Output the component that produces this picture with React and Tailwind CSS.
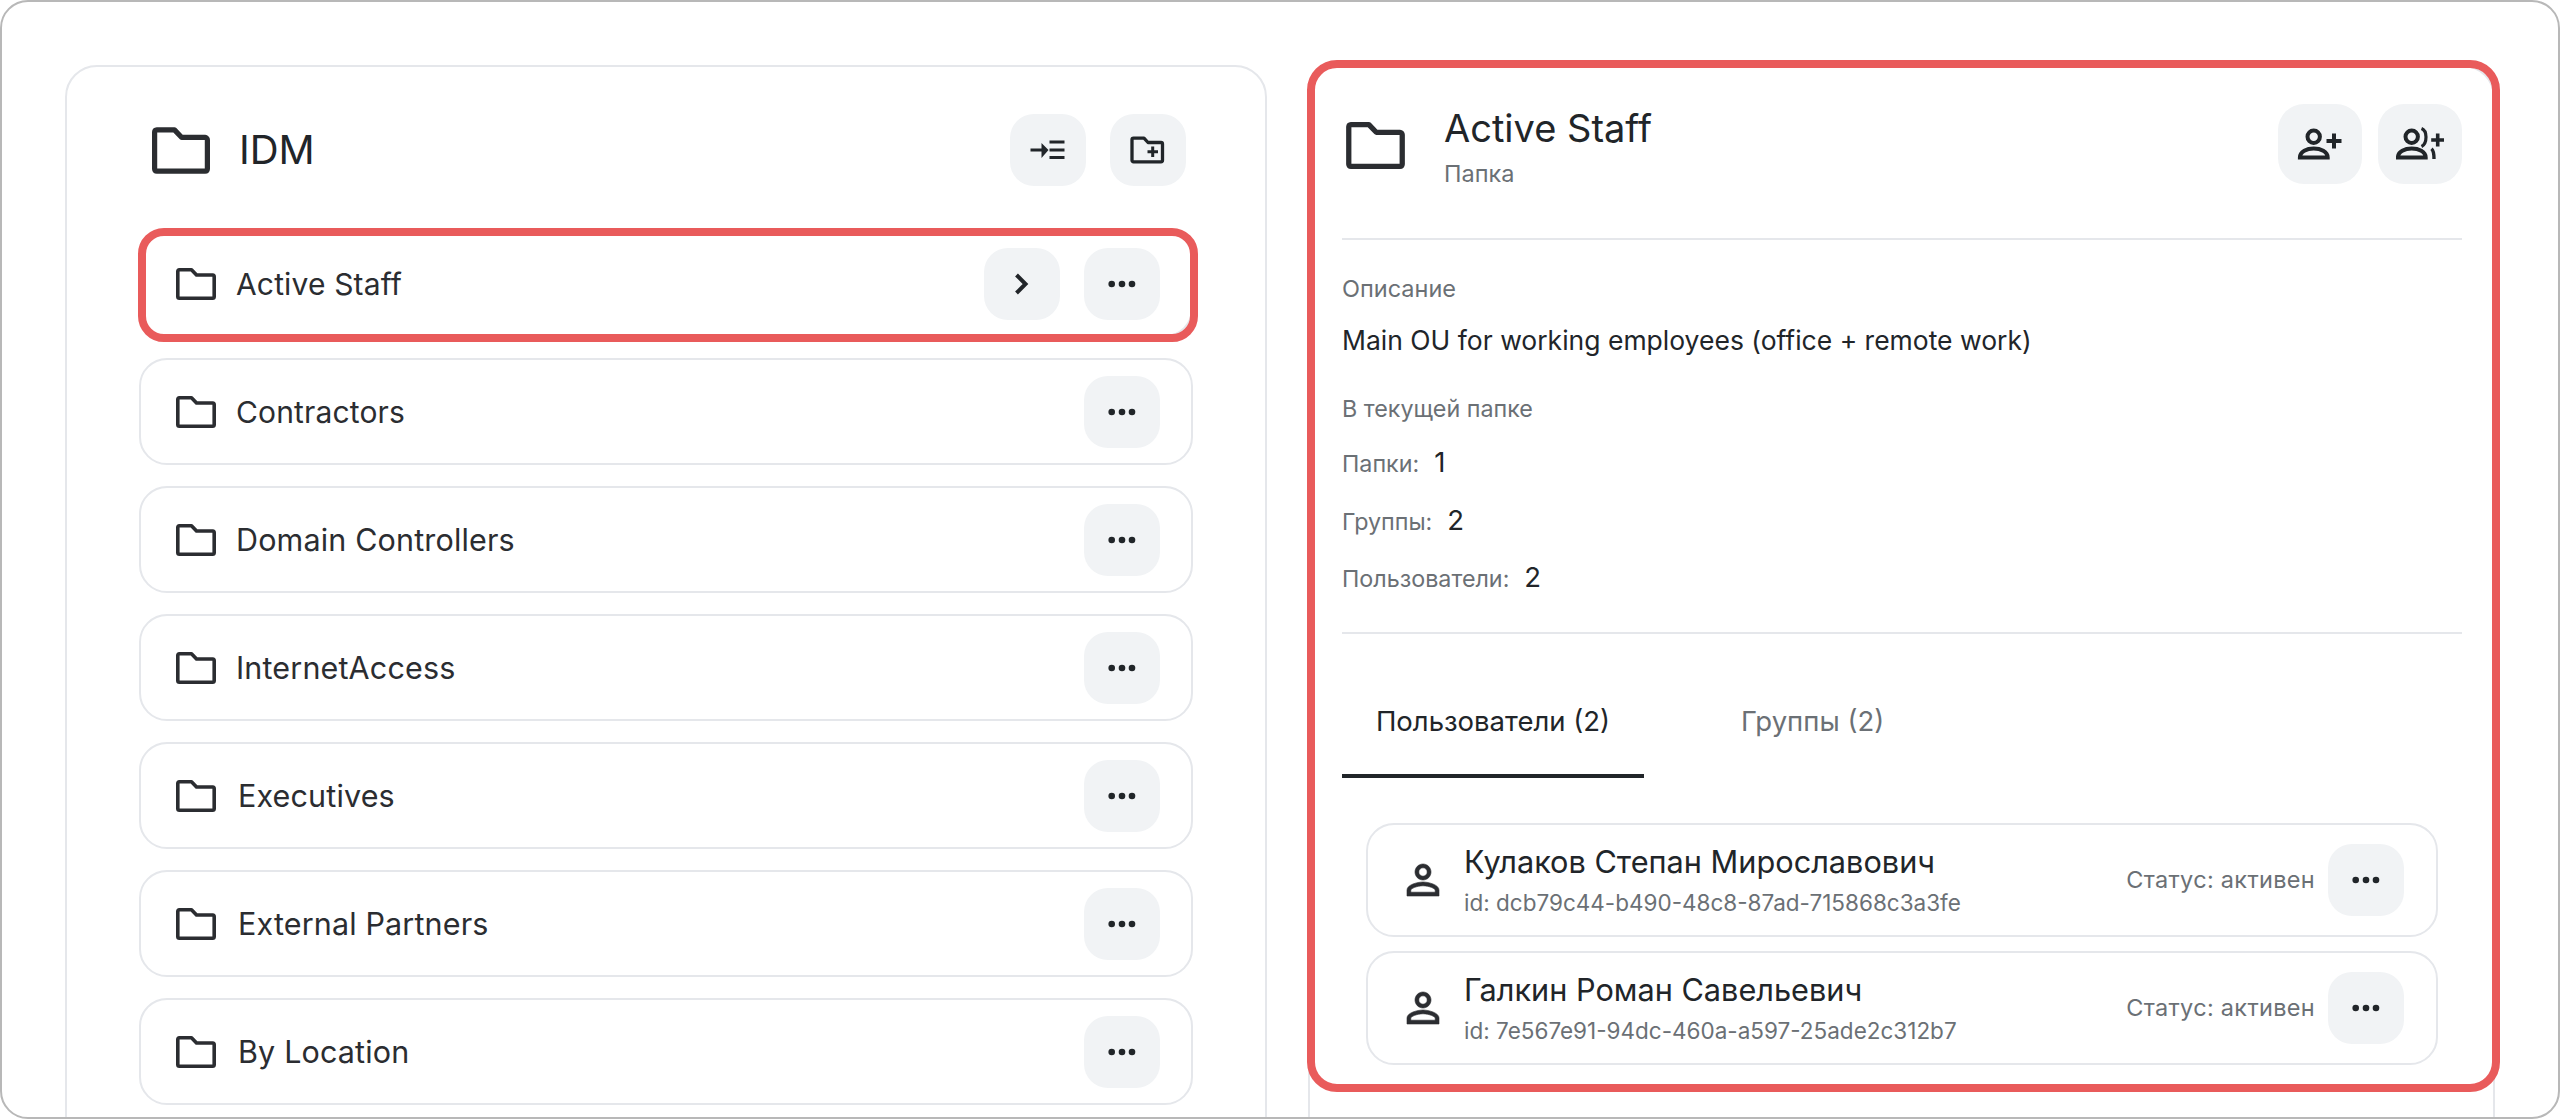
import React from 'react';

const folders = [
  { name: 'Active Staff', cls: 'ml-5 text-[30px]' },
  { name: 'Contractors', cls: 'ml-5 text-[30px]' },
  { name: 'Domain Controllers', cls: 'ml-5 text-[30.5px]' },
  { name: 'InternetAccess', cls: 'ml-5 text-[30.5px]' },
  { name: 'Executives', cls: 'ml-[22px] text-[30.5px]' },
  { name: 'External Partners', cls: 'ml-[22px] text-[30.5px]' },
  { name: 'By Location', cls: 'ml-[22px] text-[30.5px]' },
];

const users = [
  { name: 'Кулаков Степан Мирославович', id: 'dcb79c44-b490-48c8-87ad-715868c3a3fe' },
  { name: 'Галкин Роман Савельевич', id: '7e567e91-94dc-460a-a597-25ade2c312b7' },
];

const FolderIcon = ({ className }) => (
  <svg viewBox="0 0 40 32" className={className} fill="none" stroke="#2b2d31" strokeWidth="3.6" strokeLinejoin="round">
    <path d="M3.4 1.8H15.5L20.5 7H36.6A1.7 1.7 0 0 1 38.2 8.7V28.6A1.7 1.7 0 0 1 36.6 30.2H3.4A1.7 1.7 0 0 1 1.8 28.6V3.4A1.7 1.7 0 0 1 3.4 1.8Z" />
  </svg>
);

const Dots = () => (
  <svg viewBox="0 0 48 48" className="w-12 h-12" fill="#212529">
    <circle cx="13.7" cy="24" r="3.3" />
    <circle cx="24" cy="24" r="3.3" />
    <circle cx="34" cy="24" r="3.3" />
  </svg>
);

const Chevron = () => (
  <svg viewBox="0 0 48 48" className="w-12 h-12" fill="none" stroke="#212529" strokeWidth="4">
    <path d="M18.5 15L27.5 24L18.5 33" />
  </svg>
);

const IndentIcon = () => (
  <svg viewBox="0 0 48 48" className="w-12 h-12" fill="#212529">
    <path d="M6.5 22.5H17.5V17L24.5 24L17.5 32V25.5H6.5Z" />
    <path d="M25.5 14.5H40.5V17.5H25.5ZM25.5 22.5H40.5V25.5H25.5ZM25.5 30H40.5V33H25.5Z" />
  </svg>
);

const FolderAddIcon = () => (
  <svg viewBox="0 0 48 48" className="w-12 h-12" fill="none" stroke="#212529" strokeWidth="3.3" strokeLinejoin="round">
    <path d="M9.5 12.2H20L24 16.5H37A1.5 1.5 0 0 1 38.5 18V34.3A1.5 1.5 0 0 1 37 35.8H9.5A1.5 1.5 0 0 1 8 34.3V13.7A1.5 1.5 0 0 1 9.5 12.2Z" />
    <path d="M28.7 20.5V31M23.5 25.7H34" strokeWidth="3" />
  </svg>
);

const PersonAddIcon = () => (
  <svg viewBox="0 0 48 48" className="w-12 h-12" fill="none" stroke="#212529" strokeWidth="4">
    <circle cx="17.7" cy="16.7" r="6.2" />
    <path d="M3.9 37.6C3.9 31.5 11 28.6 17.7 28.6C24.5 28.6 31.7 31.5 31.7 37.6Z" />
    <path d="M38 13.5V28.5M30.5 21H45.5" />
  </svg>
);

const GroupAddIcon = () => (
  <svg viewBox="0 0 48 48" className="w-12 h-12" fill="none" stroke="#212529" strokeWidth="4">
    <circle cx="15.7" cy="16.7" r="6.2" />
    <path d="M1.9 37.6C1.9 31.5 9 28.6 15.7 28.6C22.5 28.6 29.7 31.5 29.7 37.6Z" />
    <path d="M25.5 8.5C29.5 10 30 14 30 17C30 20 29.5 24.5 25.5 26.5" strokeWidth="3.2" />
    <path d="M35.5 28.8C37.5 30.5 38 33 38 39" strokeWidth="3.4" />
    <path d="M41.7 13.5V26.5M35.2 20H48" strokeWidth="3.6" />
  </svg>
);

const PersonIcon = () => (
  <svg viewBox="0 0 24 24" className="w-12 h-12" fill="#2b2d31" stroke="#2b2d31" strokeWidth="0.3">
    <path d="M12 5.9c1.16 0 2.1.94 2.1 2.1s-.94 2.1-2.1 2.1S9.9 9.16 9.9 8s.94-2.1 2.1-2.1m0 9c2.97 0 6.1 1.46 6.1 2.1v1.1H5.9V17c0-.64 3.13-2.1 6.1-2.1M12 4C9.79 4 8 5.79 8 8s1.79 4 4 4 4-1.79 4-4-1.79-4-4-4zm0 9c-2.67 0-8 1.34-8 4v3h16v-3c0-2.66-5.33-4-8-4z" />
  </svg>
);

const SmallButton = ({ children }) => (
  <button className="w-[76px] h-[72px] rounded-[24px] bg-[#f1f3f5] flex items-center justify-center shrink-0">
    {children}
  </button>
);

const BigButton = ({ children }) => (
  <button className="w-[84px] h-20 rounded-[26px] bg-[#f1f3f5] flex items-center justify-center shrink-0">
    {children}
  </button>
);

const FolderRow = ({ item, active }) => (
  <div className="relative h-[107px] rounded-[28px] border-2 border-[#e5e7eb] flex items-center pl-[35px] pr-[31px]">
    <FolderIcon className="w-10 h-8 shrink-0" />
    <span className={`${item.cls} tracking-[0.15px] leading-9 text-[#2b2d31]`}>{item.name}</span>
    <div className="ml-auto flex gap-6">
      {active && <SmallButton><Chevron /></SmallButton>}
      <SmallButton><Dots /></SmallButton>
    </div>
    {active && <div className="absolute -left-[3px] -right-[7px] -top-1 -bottom-[7px] rounded-[26px] border-8 border-[#e95b5b] pointer-events-none" />}
  </div>
);

const Stat = ({ label, value }) => (
  <div className="flex items-baseline gap-[15px] h-9 mt-[21.5px] first:mt-5">
    <span className="text-[23.3px] leading-9 text-[#6b7075]">{label}</span>
    <span className="text-[27.5px] leading-9 text-[#212529]">{value}</span>
  </div>
);

const UserRow = ({ user }) => (
  <div className="h-[114px] rounded-[28px] border-2 border-[#e5e7eb] flex items-center pl-[31px] pr-8">
    <PersonIcon />
    <div className="ml-[17px]">
      <div className="text-[30.7px] leading-[38px] text-[#212529]">{user.name}</div>
      <div className="mt-[7px] text-[22.5px] leading-[30px] text-[#6b7075]">id: {user.id}</div>
    </div>
    <span className="ml-auto mr-[13px] text-[23.5px] tracking-[0.3px] text-[#6b7075]">Статус: активен</span>
    <SmallButton><Dots /></SmallButton>
  </div>
);

const App = () => {
  return (
    <div className="w-[2560px] h-[1119px] overflow-hidden bg-white border-2 border-[#b8b8b8] rounded-[28px] flex items-start gap-[41px] pl-[63px] pt-[63px] font-['Inter','Noto_Sans',sans-serif]">
      {/* left: folder tree */}
      <div className="w-[1202px] h-[1200px] shrink-0 rounded-[32px] border-2 border-[#e5e7eb] px-[72px] pt-[47px]">
        <div className="flex items-center h-[72px]">
          <FolderIcon className="w-[58px] h-[47px] ml-[13px] shrink-0" />
          <span className="ml-[29px] text-[40px] leading-[46px] text-[#212529]">IDM</span>
          <div className="ml-auto flex gap-6 pr-[7px]">
            <SmallButton><IndentIcon /></SmallButton>
            <SmallButton><FolderAddIcon /></SmallButton>
          </div>
        </div>
        <div className="mt-[44px] flex flex-col gap-[21px]">
          {folders.map((f, i) => <FolderRow key={f.name} item={f} active={i === 0} />)}
        </div>
      </div>

      {/* right: details of selected folder */}
      <div className="relative w-[1187px] h-[1200px] shrink-0 rounded-[32px] border-2 border-[#e5e7eb] pl-8 pr-[31px] pt-[37px]">
        <div className="flex items-start">
          <FolderIcon className="w-[59px] h-[47px] ml-1 mt-[18px] shrink-0" />
          <div className="ml-[39px] mt-px">
            <div className="text-[38px] leading-[46px] text-[#212529]">Active Staff</div>
            <div className="mt-2 text-[23.5px] leading-[30px] text-[#6b7075]">Папка</div>
          </div>
          <div className="ml-auto flex gap-4">
            <BigButton><PersonAddIcon /></BigButton>
            <BigButton><GroupAddIcon /></BigButton>
          </div>
        </div>
        <div className="mt-[49px] h-0.5 bg-[#e5e7eb]" />

        <div className="mt-[34px] text-[23.5px] leading-[30px] text-[#6b7075]">Описание</div>
        <div className="mt-[18px] text-[26.5px] leading-9 text-[#212529]">Main OU for working employees (office + remote work)</div>
        <div className="mt-9 text-[23.3px] leading-[30px] text-[#6b7075]">В текущей папке</div>
        <div>
          <Stat label="Папки:" value="1" />
          <Stat label="Группы:" value="2" />
          <Stat label="Пользователи:" value="2" />
        </div>
        <div className="mt-[37px] h-0.5 bg-[#e5e7eb]" />

        <div className="flex items-start gap-[97px]">
          <div className="w-[302px] pt-[70px] pb-9 border-b-4 border-[#212529] text-center text-[27.5px] leading-[34px] text-[#212529]">Пользователи (2)</div>
          <div className="pt-[70px] text-[27.5px] leading-[34px] text-[#6b7075]">Группы (2)</div>
        </div>

        <div className="mt-[45px] mx-6 flex flex-col gap-[14px]">
          {users.map(u => <UserRow key={u.id} user={u} />)}
        </div>

        <div className="absolute -left-[3px] -right-[7px] -top-[7px] h-[1032px] rounded-[30px] border-8 border-[#e95b5b] pointer-events-none" />
      </div>
    </div>
  );
};

export default App;
